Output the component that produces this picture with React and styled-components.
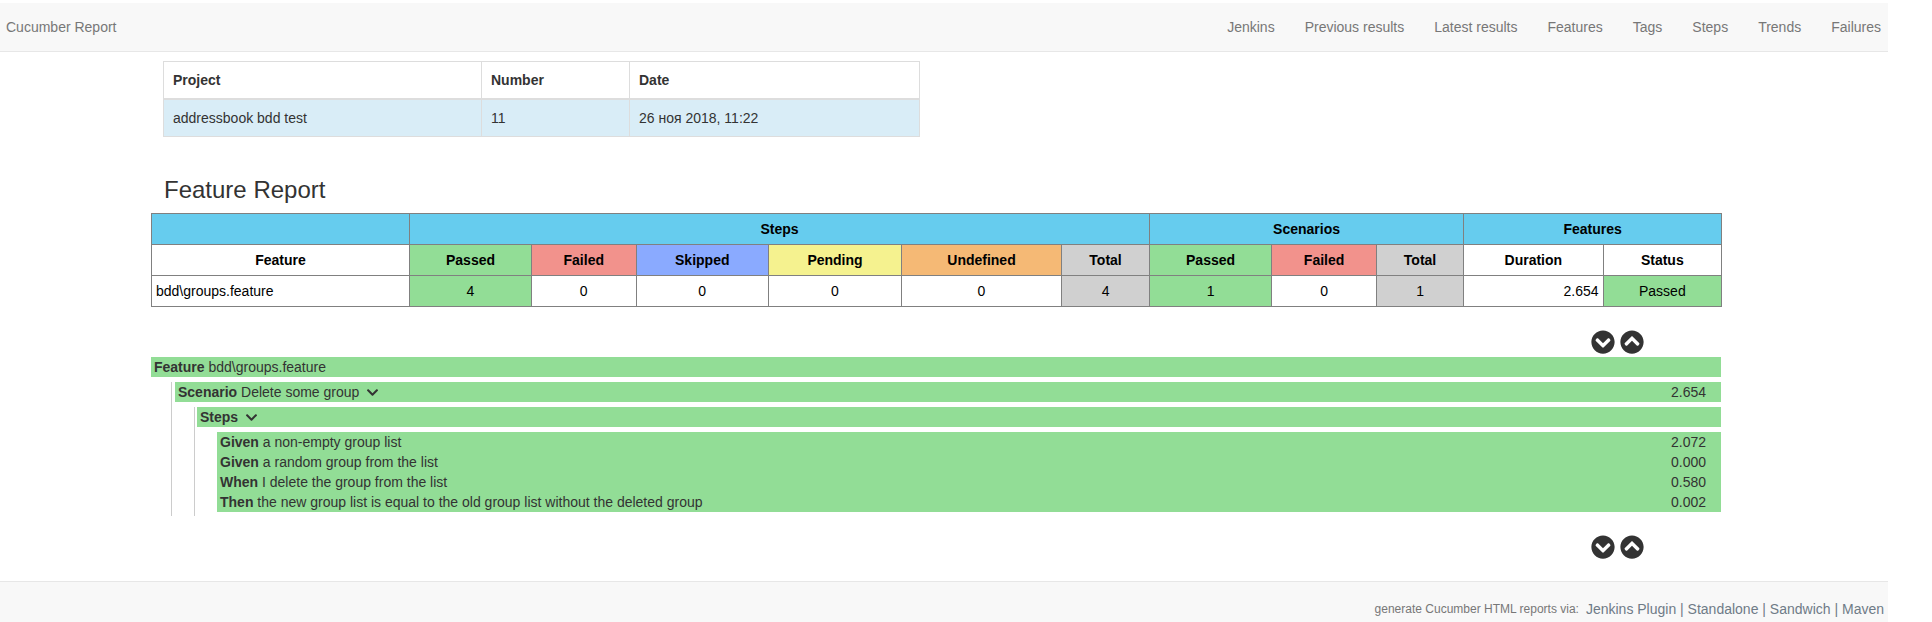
import styled, { createGlobalStyle } from 'styled-components';
import { FaChevronCircleDown, FaChevronCircleUp, FaChevronDown } from 'react-icons/fa';

const GlobalStyle = createGlobalStyle`
  html, body {
    margin: 0;
    padding: 0;
    background: #fff;
    overflow: hidden;
  }
  body {
    font-family: "Liberation Sans", Arial, sans-serif;
    font-size: 14px;
    line-height: 20px;
    color: #333;
  }
`;

const colors = {
  header: '#66CCEE',
  passed: '#92DD96',
  failed: '#F2928C',
  skipped: '#8AAAFF',
  pending: '#F5F28F',
  undef: '#F5B975',
  total: '#D0D0D0',
};

const Page = styled.div`
  width: 1888px;
  height: 622px;
  display: flex;
  flex-direction: column;
  padding-top: 3px;
  box-sizing: border-box;
`;

const Navbar = styled.nav`
  height: 49px;
  flex: none;
  box-sizing: border-box;
  background: #f8f8f8;
  border-bottom: 1px solid #e7e7e7;
  display: flex;
  justify-content: space-between;
  align-items: center;
  padding: 0 7px 1px 6px;
  color: #777;
`;

const Brand = styled.span`
  color: #777;
`;

const NavLinks = styled.div`
  display: flex;
  gap: 30px;
`;

const Content = styled.main`
  flex: 1;
  padding: 9px 167px 0 151px;
`;

const InfoTable = styled.table`
  margin-left: 12px;
  width: 757px;
  table-layout: fixed;
  border-collapse: collapse;
  background: #fff;

  th, td {
    border: 1px solid #ddd;
    padding: 8px 8px 8px 9px;
    height: 20px;
    text-align: left;
    line-height: 20px;
  }
  th {
    font-weight: bold;
    border-bottom-width: 2px;
  }
  td {
    background: #d9edf7;
  }
`;

const Title = styled.h2`
  margin: 40px 0 0 13px;
  font-size: 24px;
  font-weight: 500;
  line-height: 26px;
  height: 36px;
`;

const StatsTable = styled.table`
  width: 1570px;
  table-layout: fixed;
  border-collapse: collapse;
  color: #000;

  th, td {
    border: 1px solid #808080;
    height: 31px;
    padding: 0 4px;
    box-sizing: border-box;
    text-align: center;
    line-height: 20px;
  }
  th {
    font-weight: bold;
  }
`;

const Cell = styled.td`
  && {
    background: ${({ $tone }) => colors[$tone] || '#fff'};
    text-align: ${({ $align }) => $align || 'center'};
  }
`;

const HeadCell = styled.th`
  && {
    background: ${({ $tone }) => colors[$tone] || '#fff'};
  }
`;

const ToggleRow = styled.div`
  display: flex;
  justify-content: flex-end;
  gap: 5px;
  height: 24px;
  padding-right: 77px;
  color: #333;
  font-size: 24px;
  margin: ${({ $top }) => $top}px 0 ${({ $bottom }) => $bottom}px;
`;

const Bar = styled.div`
  background: ${colors.passed};
  display: flex;
  justify-content: space-between;
  height: 20px;
  line-height: 20px;
  padding: 0 15px 0 3px;
  color: #333;

  b {
    font-weight: bold;
  }
  svg {
    font-size: 13px;
    margin-left: 3px;
    vertical-align: -2px;
  }
`;

const Nested = styled.div`
  margin-top: 5px;
  margin-left: ${({ $offset }) => $offset}px;
  padding-left: ${({ $pad }) => $pad}px;
  border-left: 1px solid #ccc;
`;

const StepList = styled.div`
  margin-top: 5px;
  margin-left: 20px;
  padding-bottom: 4px;
`;

const Footer = styled.footer`
  height: 41px;
  flex: none;
  box-sizing: border-box;
  background: #f8f8f8;
  border-top: 1px solid #e7e7e7;
  display: flex;
  justify-content: flex-end;
  align-items: flex-end;
  gap: 7px;
  padding: 0 4px 3px 0;
  color: #777;
`;

const FooterNote = styled.span`
  font-size: 12px;
`;

const FooterLinks = styled.span`
  color: #6f7b87;
`;

const navItems = ['Jenkins', 'Previous results', 'Latest results', 'Features', 'Tags', 'Steps', 'Trends', 'Failures'];

const steps = [
  ['Given', 'a non-empty group list', '2.072'],
  ['Given', 'a random group from the list', '0.000'],
  ['When', 'I delete the group from the list', '0.580'],
  ['Then', 'the new group list is equal to the old group list without the deleted group', '0.002'],
];

const colWidths = [258, 122, 104.5, 132.5, 133, 160, 88, 122, 105, 87, 139.5, 118.5];

function Toggles({ top, bottom }) {
  return (
    <ToggleRow $top={top} $bottom={bottom}>
      <FaChevronCircleDown />
      <FaChevronCircleUp />
    </ToggleRow>
  );
}

export default function App() {
  return (
    <Page>
      <GlobalStyle />
      <Navbar>
        <Brand>Cucumber Report</Brand>
        <NavLinks>
          {navItems.map((item) => (
            <span key={item}>{item}</span>
          ))}
        </NavLinks>
      </Navbar>
      <Content>
        <InfoTable>
          <colgroup>
            <col style={{ width: 318 }} />
            <col style={{ width: 148 }} />
            <col />
          </colgroup>
          <thead>
            <tr>
              <th>Project</th>
              <th>Number</th>
              <th>Date</th>
            </tr>
          </thead>
          <tbody>
            <tr>
              <td>addressbook bdd test</td>
              <td>11</td>
              <td>26 ноя 2018, 11:22</td>
            </tr>
          </tbody>
        </InfoTable>
        <Title>Feature Report</Title>
        <StatsTable>
          <colgroup>
            {colWidths.map((w, i) => (
              <col key={i} style={{ width: w }} />
            ))}
          </colgroup>
          <thead>
            <tr>
              <HeadCell $tone="header" />
              <HeadCell $tone="header" colSpan={6}>Steps</HeadCell>
              <HeadCell $tone="header" colSpan={3}>Scenarios</HeadCell>
              <HeadCell $tone="header" colSpan={2}>Features</HeadCell>
            </tr>
            <tr>
              <HeadCell>Feature</HeadCell>
              <HeadCell $tone="passed">Passed</HeadCell>
              <HeadCell $tone="failed">Failed</HeadCell>
              <HeadCell $tone="skipped">Skipped</HeadCell>
              <HeadCell $tone="pending">Pending</HeadCell>
              <HeadCell $tone="undef">Undefined</HeadCell>
              <HeadCell $tone="total">Total</HeadCell>
              <HeadCell $tone="passed">Passed</HeadCell>
              <HeadCell $tone="failed">Failed</HeadCell>
              <HeadCell $tone="total">Total</HeadCell>
              <HeadCell>Duration</HeadCell>
              <HeadCell>Status</HeadCell>
            </tr>
          </thead>
          <tbody>
            <tr>
              <Cell $align="left">bdd\groups.feature</Cell>
              <Cell $tone="passed">4</Cell>
              <Cell>0</Cell>
              <Cell>0</Cell>
              <Cell>0</Cell>
              <Cell>0</Cell>
              <Cell $tone="total">4</Cell>
              <Cell $tone="passed">1</Cell>
              <Cell>0</Cell>
              <Cell $tone="total">1</Cell>
              <Cell $align="right">2.654</Cell>
              <Cell $tone="passed">Passed</Cell>
            </tr>
          </tbody>
        </StatsTable>
        <Toggles top={23} bottom={3} />
        <Bar>
          <span><b>Feature</b> bdd\groups.feature</span>
        </Bar>
        <Nested $offset={20} $pad={3}>
          <Bar>
            <span><b>Scenario</b> Delete some group <FaChevronDown /></span>
            <span>2.654</span>
          </Bar>
          <Nested $offset={19} $pad={2}>
            <Bar>
              <span><b>Steps</b> <FaChevronDown /></span>
            </Bar>
            <StepList>
              {steps.map(([keyword, text, time]) => (
                <Bar key={text}>
                  <span><b>{keyword}</b> {text}</span>
                  <span>{time}</span>
                </Bar>
              ))}
            </StepList>
          </Nested>
        </Nested>
        <Toggles top={19} bottom={0} />
      </Content>
      <Footer>
        <FooterNote>generate Cucumber HTML reports via:</FooterNote>
        <FooterLinks>Jenkins Plugin | Standalone | Sandwich | Maven</FooterLinks>
      </Footer>
    </Page>
  );
}
